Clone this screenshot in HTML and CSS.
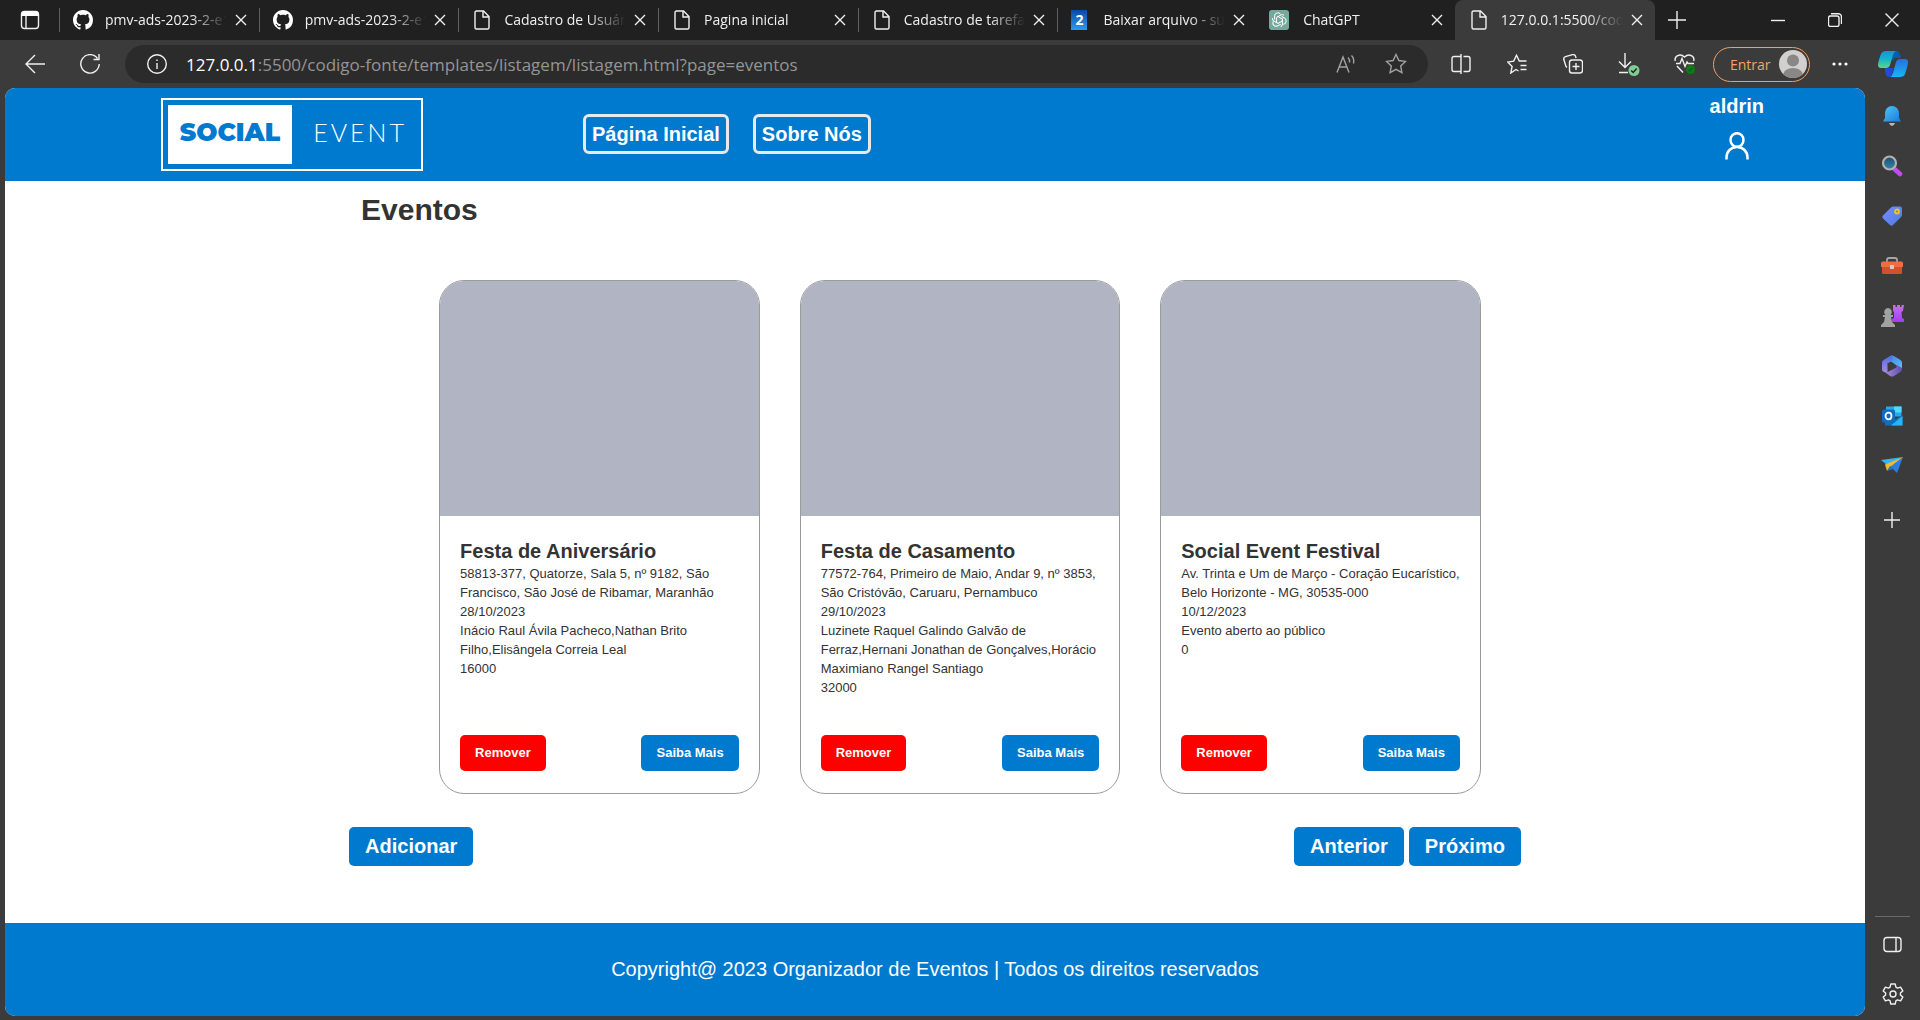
FILE: index.html
```html
<!DOCTYPE html>
<html lang="pt-BR">
<head>
<meta charset="utf-8">
<meta name="viewport" content="width=device-width, initial-scale=1">
<title>Eventos</title>
<link rel="stylesheet" href="styles.css">
</head>
<body>
<svg class="defs" aria-hidden="true">
  <symbol id="close" viewBox="0 0 12 12"><path d="M1 1l10 10M11 1L1 11"/></symbol>
  <symbol id="file" viewBox="0 0 20 20"><path d="M4.500 1h7L17 6.500V17.500a1.500 1.500 0 0 1-1.500 1.500h-11A1.500 1.500 0 0 1 3 17.500v-15A1.500 1.500 0 0 1 4.500 1zM11 1.500V7h5.500"/></symbol>
  <symbol id="github" viewBox="0 0 16 16"><path d="M8 0C3.580 0 0 3.580 0 8c0 3.540 2.290 6.530 5.470 7.590.4.070.55-.17.55-.38 0-.19-.01-.82-.01-1.490-2.010.37-2.530-.49-2.690-.94-.09-.23-.48-.94-.82-1.130-.28-.15-.68-.52-.01-.53.63-.01 1.080.58 1.230.82.72 1.210 1.870.87 2.330.66.070-.52.28-.87.51-1.070-1.780-.2-3.640-.89-3.640-3.950 0-.87.31-1.590.82-2.150-.08-.2-.36-1.020.08-2.120 0 0 .67-.21 2.200.82.64-.18 1.320-.27 2-.27s1.360.09 2 .27c1.530-1.040 2.200-.82 2.200-.82.44 1.100.16 1.920.08 2.120.51.56.82 1.270.82 2.150 0 3.070-1.870 3.750-3.650 3.950.29.25.54.73.54 1.480 0 1.070-.01 1.930-.01 2.200 0 .21.15.46.55.38A8.010 8.010 0 0 0 16 8c0-4.420-3.580-8-8-8z"/></symbol>
  <symbol id="star" viewBox="0 0 22 22"><path d="M11 1.500l2.900 6 6.600.9-4.800 4.600 1.200 6.600-5.900-3.200-5.900 3.200 1.200-6.600L1.500 8.400l6.600-.9z"/></symbol>
</svg>

<header class="browser-top">
  <div class="tab-strip">
    <button class="tab-actions" aria-label="Menu de guias"><svg width="20" height="20" viewBox="0 0 20 20"><rect class="line" x="1.500" y="1.500" width="17" height="17" rx="3"/><path class="solid" d="M1 5a4 4 0 0 1 4-4h10a4 4 0 0 1 4 4v1H1z"/><path class="line" d="M6 6v12"/></svg></button>
    <div class="tabs" role="tablist">
      <div class="tab" role="tab"><svg class="fav solid"><use href="#github"/></svg><span class="title">pmv-ads-2023-2-e1-proj</span><button aria-label="Fechar guia"><svg class="line x"><use href="#close"/></svg></button></div>
      <div class="tab" role="tab"><svg class="fav solid"><use href="#github"/></svg><span class="title">pmv-ads-2023-2-e1-proj</span><button aria-label="Fechar guia"><svg class="line x"><use href="#close"/></svg></button></div>
      <div class="tab" role="tab"><svg class="fav line"><use href="#file"/></svg><span class="title">Cadastro de Usuário</span><button aria-label="Fechar guia"><svg class="line x"><use href="#close"/></svg></button></div>
      <div class="tab" role="tab"><svg class="fav line"><use href="#file"/></svg><span class="title">Pagina inicial</span><button aria-label="Fechar guia"><svg class="line x"><use href="#close"/></svg></button></div>
      <div class="tab" role="tab"><svg class="fav line"><use href="#file"/></svg><span class="title">Cadastro de tarefas</span><button aria-label="Fechar guia"><svg class="line x"><use href="#close"/></svg></button></div>
      <div class="tab" role="tab"><span class="fav two">2</span><span class="title">Baixar arquivo - suporte</span><button aria-label="Fechar guia"><svg class="line x"><use href="#close"/></svg></button></div>
      <div class="tab plain" role="tab"><svg class="fav" viewBox="0 0 20 20"><rect width="20" height="20" rx="3" fill="#74aa9c"/><g fill="none" stroke="#fff"><path id="petal" d="M5.600 9.500V6a3.300 3.300 0 0 1 6-1.800M7.500 13V7.500l4.500-2.600a3.300 3.300 0 0 1 3 .3"/><use href="#petal" transform="rotate(120 10 10)"/><use href="#petal" transform="rotate(240 10 10)"/></g></svg><span class="title">ChatGPT</span><button aria-label="Fechar guia"><svg class="line x"><use href="#close"/></svg></button></div>
      <div class="tab active" role="tab" aria-selected="true"><svg class="fav line"><use href="#file"/></svg><span class="title">127.0.0.1:5500/codigo-fonte</span><button aria-label="Fechar guia"><svg class="line x"><use href="#close"/></svg></button></div>
    </div>
    <button class="new-tab" aria-label="Nova guia"><svg class="line" width="18" height="18"><path d="M9 0v18M0 9h18"/></svg></button>
    <div class="window-controls">
      <button aria-label="Minimizar"><svg class="line" width="14" height="14"><path d="M0 7.500h14"/></svg></button>
      <button aria-label="Restaurar"><svg class="line" width="14" height="14"><rect x=".5" y="3" width="10.500" height="10.500" rx="2"/><path d="M3 .8h7.500a3 3 0 0 1 3 3V11"/></svg></button>
      <button aria-label="Fechar"><svg class="line" width="14" height="14"><path d="M.5.5l13 13M13.500.5l-13 13"/></svg></button>
    </div>
  </div>

  <div class="toolbar">
    <button class="nav-btn" aria-label="Voltar"><svg class="line" width="20" height="20"><path d="M20 10H1M10 1L1 10l9 9"/></svg></button>
    <button class="nav-btn" aria-label="Atualizar"><svg class="line" width="20" height="20"><path d="M17.500 4.500A9.200 9.200 0 1 0 19.200 10M19 0v5.500h-5.500"/></svg></button>
    <div class="address">
      <svg class="line" width="20" height="20"><circle cx="10" cy="10" r="9.300"/><path d="M10 9v6M10 5.500v1.500"/></svg>
      <span class="host">127.0.0.1</span><input type="text" aria-label="Endereço" value=":5500/codigo-fonte/templates/listagem/listagem.html?page=eventos">
      <button class="dim" aria-label="Ler em voz alta"><svg class="line" width="20" height="20"><path d="M1 18.500L7 3l6 15.500M3 13h8M12 3.500q2 2 1.500 5M15.500 1.500q3 3 2 8"/></svg></button>
      <button class="dim" aria-label="Adicionar aos favoritos"><svg class="line" width="22" height="22"><use href="#star"/></svg></button>
    </div>
    <div class="tools">
      <button aria-label="Dividir tela"><svg class="line" width="20" height="20"><path d="M7.500 2.500H3a2 2 0 0 0-2 2v11a2 2 0 0 0 2 2h4.500M12.500 2.500H17a2 2 0 0 1 2 2v11a2 2 0 0 1-2 2h-4.500M10 0v20M7.500 2.500H10M7.500 17.500H10"/></svg></button>
      <button aria-label="Favoritos"><svg class="line" width="20" height="20"><path d="M11.500 17L9 15.500 3.800 19l1.300-6.500L.7 8l6-.9L9.500 1.300 12.300 7h7.200M13.500 11.500h6M13.500 15.500h6"/></svg></button>
      <button aria-label="Coleções"><svg class="line" width="20" height="20"><rect x="6.500" y="6" width="13" height="13" rx="2.500"/><path d="M13 9v7M9.500 12.500h7M4 13.500l-1-1L.8 5.500A2.500 2.500 0 0 1 2.500 2.700l7-2A2.500 2.500 0 0 1 12.600 2.500l.5 1.500"/></svg></button>
      <button aria-label="Downloads"><svg class="line" width="22" height="24"><path d="M7 1v14M1 9.500L7 15.500 13 9.500M1 20.500h9"/><circle cx="16" cy="18.500" r="5.500" fill="#7fce94" stroke="none"/><path d="M13.200 18.500l2 2 3.500-4" stroke="#222"/></svg></button>
      <button aria-label="Desempenho"><svg class="line" width="22" height="22"><path d="M2 10.500h4l2-5 3 8 2-4.500 1 1.500h6M1.300 8C0 3 6 0 10.500 4 15 0 21 3 19.700 8M3 13l6 6.500"/><circle cx="16.500" cy="16.500" r="4.500" fill="#107c10" stroke="none"/><path d="M14.500 16.500l1.500 1.500 2.500-3" stroke="#063"/></svg></button>
    </div>
    <button class="signin">Entrar<svg width="28" height="28" viewBox="0 0 28 28"><defs><clipPath id="round"><circle cx="14" cy="14" r="14"/></clipPath></defs><g clip-path="url(#round)"><rect width="28" height="28" fill="#d2d0ce"/><circle cx="14" cy="10.500" r="6" fill="#8a8886"/><ellipse cx="14" cy="25" rx="10" ry="7" fill="#8a8886"/></g></svg></button>
    <button class="more" aria-label="Mais"><svg width="16" height="4"><g fill="#fff"><circle cx="2" cy="2" r="1.600"/><circle cx="8" cy="2" r="1.600"/><circle cx="14" cy="2" r="1.600"/></g></svg></button>
    <button class="copilot" aria-label="Copilot"><svg width="30" height="28" viewBox="0 0 30 28"><defs><linearGradient id="cpa" x1="0" y1="0" x2="0" y2="1"><stop offset="0" stop-color="#1595d8"/><stop offset=".5" stop-color="#18b5c8"/><stop offset="1" stop-color="#5fd68a"/></linearGradient><linearGradient id="cpb" x1="0" y1="0" x2="0" y2="1"><stop offset="0" stop-color="#2a6fdc"/><stop offset="1" stop-color="#16b6f6"/></linearGradient></defs><path fill="#0c5ba8" d="M13 1h6q2 0 3 3l1 4h-6l-3 3z"/><path fill="#1f4bd8" d="M7 18h8l1-3-2 9q-1 3-3 3-3 0-4-5z"/><path fill="url(#cpa)" d="M8 1h10q-2 1-3 4l-3 10q-1 3-4 3H3q-3 0-3-3 0-3 3-11 1-3 5-3z"/><path fill="url(#cpb)" d="M22 27H12q2-1 3-4l3-11q1-3 4-3h5q3 0 3 3 0 3-3 12-1 3-5 3z"/></svg></button>
  </div>
</header>

<div class="browser-body">
  <div class="page">
    <header class="site-header">
      <a class="logo" href="#"><span class="logo-social">SOCIAL</span><span class="logo-event">EVENT</span></a>
      <nav class="site-nav">
        <a href="#">Página Inicial</a>
        <a href="#">Sobre Nós</a>
      </nav>
      <a class="user" href="#">aldrin<svg width="24" height="28" viewBox="0 0 24 28"><ellipse cx="12" cy="8" rx="6.500" ry="6.800"/><path d="M1.500 27.500v-2c0-6 4.500-10.500 10.500-10.500s10.500 4.500 10.500 10.500v2"/></svg></a>
    </header>

    <main class="content">
      <h1>Eventos</h1>
      <ul class="cards">
        <li class="card">
          <div class="card-image"></div>
          <div class="card-body">
            <h2>Festa de Aniversário</h2>
            <p>58813-377, Quatorze, Sala 5, nº 9182, São Francisco, São José de Ribamar, Maranhão</p>
            <p>28/10/2023</p>
            <p>Inácio Raul Ávila Pacheco,Nathan Brito Filho,Elisângela Correia Leal</p>
            <p>16000</p>
            <div class="card-actions"><button class="btn small danger">Remover</button><button class="btn small">Saiba Mais</button></div>
          </div>
        </li>
        <li class="card">
          <div class="card-image"></div>
          <div class="card-body">
            <h2>Festa de Casamento</h2>
            <p>77572-764, Primeiro de Maio, Andar 9, nº 3853, São Cristóvão, Caruaru, Pernambuco</p>
            <p>29/10/2023</p>
            <p>Luzinete Raquel Galindo Galvão de Ferraz,Hernani Jonathan de Gonçalves,Horácio Maximiano Rangel Santiago</p>
            <p>32000</p>
            <div class="card-actions"><button class="btn small danger">Remover</button><button class="btn small">Saiba Mais</button></div>
          </div>
        </li>
        <li class="card">
          <div class="card-image"></div>
          <div class="card-body">
            <h2>Social Event Festival</h2>
            <p>Av. Trinta e Um de Março - Coração Eucarístico, Belo Horizonte - MG, 30535-000</p>
            <p>10/12/2023</p>
            <p>Evento aberto ao público</p>
            <p>0</p>
            <div class="card-actions"><button class="btn small danger">Remover</button><button class="btn small">Saiba Mais</button></div>
          </div>
        </li>
      </ul>
      <div class="pager">
        <button class="btn">Adicionar</button>
        <div class="pager-nav"><button class="btn">Anterior</button><button class="btn">Próximo</button></div>
      </div>
    </main>

    <footer class="site-footer">Copyright@ 2023 Organizador de Eventos | Todos os direitos reservados</footer>
  </div>

  <aside class="sidebar">
    <svg class="defs" aria-hidden="true"><defs>
      <linearGradient id="bell" x1="0" y1="0" x2="1" y2="1"><stop offset="0" stop-color="#4cc9f5"/><stop offset="1" stop-color="#1b78dc"/></linearGradient>
      <linearGradient id="tag" x1="0" y1="0" x2="1" y2="1"><stop offset="0" stop-color="#7a8cff"/><stop offset="1" stop-color="#4a7de0"/></linearGradient>
      <linearGradient id="rook" x1="0" y1="0" x2="0" y2="1"><stop offset="0" stop-color="#c273e8"/><stop offset="1" stop-color="#a33cf5"/></linearGradient>
      <linearGradient id="lens" x1="0" y1="0" x2="0" y2="1"><stop offset="0" stop-color="#1d4f70"/><stop offset="1" stop-color="#2f86b0"/></linearGradient>
      <linearGradient id="hexa" x1="0" y1="0" x2="0" y2="1"><stop offset="0" stop-color="#4a6ee0"/><stop offset="1" stop-color="#a98be0"/></linearGradient>
      <linearGradient id="hexb" x1="0" y1="0" x2="1" y2="1"><stop offset="0" stop-color="#3f7fe0"/><stop offset="1" stop-color="#5fc4f5"/></linearGradient>
      <linearGradient id="hexc" x1="0" y1="0" x2="1" y2="0"><stop offset="0" stop-color="#b48be0"/><stop offset="1" stop-color="#5a4fae"/></linearGradient>
    </defs></svg>
    <button aria-label="Notificações"><svg width="22" height="22"><path fill="url(#bell)" d="M11 1a7 7 0 0 0-7 7v5l-2 3.500h18L18 13V8a7 7 0 0 0-7-7z"/><path fill="#b8b8b8" d="M8 18h6q-1 3-3 3t-3-3z"/></svg></button>
    <button aria-label="Pesquisar"><svg width="22" height="22"><path d="M13.500 14l5.500 5" stroke="#c04cf0" stroke-width="4.500" stroke-linecap="round"/><circle cx="8.500" cy="8" r="6.500" fill="url(#lens)" stroke="#b4b0ae" stroke-width="2.200"/></svg></button>
    <button aria-label="Compras"><svg width="22" height="22"><path fill="url(#tag)" d="M12 1.500h7q2 0 2 2V10q0 1-1 2l-8 8q-1.500 1.500-3 0l-7-6.500q-1.500-1.500 0-3L10 2.500q1-1 2-1z"/><circle cx="16" cy="6.500" r="2" fill="none" stroke="#f2c811" stroke-width="1.800"/></svg></button>
    <button aria-label="Ferramentas"><svg width="24" height="22"><path d="M7 8V5q0-2 2-2h6q2 0 2 2v3" fill="none" stroke="#a5a5a5" stroke-width="1.800"/><rect x="2" y="9" width="20" height="10" rx="1.500" fill="#d3502a"/><path fill="#ef6d42" d="M1 8q0-1.500 1.500-1.500h19Q23 6.500 23 8v4H1z"/><rect x="10" y="10" width="4" height="4" fill="#ccc"/></svg></button>
    <button aria-label="Jogos"><svg width="24" height="24"><path fill="url(#rook)" d="M13 1h2.500v2H17V1h3v2h1.500V1H24l-1 6-1.500 1 .5 6 2 1v3H12v-3l2-1V8l-1-1z"/><path fill="#a2a2a2" d="M8 4a4 4 0 0 1 2.500 7H13v2h-2l1 5 3 3v2H1v-2l3-3 1-5H3v-2h2.500A4 4 0 0 1 8 4z"/></svg></button>
    <button aria-label="Microsoft 365"><svg width="22" height="22"><path fill="url(#hexb)" d="M9 1q2-1 4 0l6.500 4Q21 6 21 8v6l-6-4-5-3.500L7 8V3z"/><path fill="url(#hexa)" d="M11 0v5L6.500 8v9q-1.500 1-3 0L2 16.500Q1 16 1 14V8q0-2 1.500-3z"/><path fill="url(#hexc)" d="M3 16.500q2 1.500 3.500.5l9-4.500V9.800L21 13v1q0 2-1.500 3L13 21q-2 1-4 0z"/></svg></button>
    <button aria-label="Outlook"><svg width="22" height="22"><path fill="#28a8ea" d="M5 1.500h15.500v10H5z"/><path fill="#50d9ff" d="M13 1.500h7.500v6H13z"/><path fill="#1070c0" d="M4 11l9 4 8.500-5v10.500H4z"/><path fill="#28b4f0" d="M21.500 11v9.500H10z"/><rect x="1" y="4.500" width="13" height="13" rx="1.500" fill="#0f6cbd"/><ellipse cx="7.500" cy="11" rx="3" ry="3.300" fill="none" stroke="#fff" stroke-width="1.800"/></svg></button>
    <button aria-label="Drop"><svg width="22" height="20"><path fill="#35b4ef" d="M0 4l22-3L6 9z"/><path fill="#2b7fe0" d="M22 1L16 17l-7-7z"/><path fill="#f5b829" d="M22 1L4 8.500 6 15l3-4z"/><path fill="#2672c8" d="M6 15l3-5 3 3z"/></svg></button>
    <button class="add" aria-label="Personalizar"><svg class="line" width="16" height="16"><path d="M8 0v16M0 8h16"/></svg></button>
    <div class="sidebar-end">
      <button aria-label="Ocultar barra lateral"><svg class="line" width="20" height="18"><rect x="1" y="1.500" width="17" height="14" rx="3"/><path d="M13 1.500v14"/></svg></button>
      <button aria-label="Configurações"><svg class="line" width="22" height="22" viewBox="0 0 22 22"><path d="M8.800 1h4.400l.7 3.200 1.600.9 3.100-1 2.200 3.800-2.400 2.200v1.800l2.400 2.200-2.200 3.800-3.100-1-1.600.9-.7 3.200H8.800l-.7-3.200-1.600-.9-3.100 1-2.200-3.800 2.400-2.200v-1.800L1.200 7.900l2.200-3.800 3.100 1 1.600-.9z" stroke-linejoin="round"/><circle cx="11" cy="11" r="3"/></svg></button>
    </div>
  </aside>
</div>
</body>
</html>
```
FILE: styles.css
```css
* { box-sizing: border-box; }

body {
  margin: 0;
  min-height: 100vh;
  display: flex;
  flex-direction: column;
  background: #3b3b3b;
  color: #fff;
  font-family: "Segoe UI", "Open Sans", sans-serif;
  font-size: 14px;
}

button {
  margin: 0;
  padding: 0;
  border: 0;
  background: none;
  color: inherit;
  font: inherit;
  cursor: pointer;
}

svg { display: block; flex: none; }
.defs { position: absolute; width: 0; height: 0; }
.line { fill: none; stroke: #f0f0f0; stroke-width: 1.4; }
.solid { fill: #fff; stroke: none; }

/* Tab strip */
.tab-strip {
  display: flex;
  height: 40px;
  background: #202020;
}
.tab-actions { width: 59px; padding-left: 20px; }
.tabs { display: flex; flex: 0 1 83.1%; min-width: 0; }
.tab {
  flex: 1 1 0;
  min-width: 0;
  display: flex;
  align-items: center;
  padding: 0 12px 0 14px;
  color: #f0f0f0;
  background: linear-gradient(#606060, #606060) 0 8px / 1px 24px no-repeat;
}
.tab.plain { background: none; padding-left: 12px; }
.tab.plain .title { margin-left: 14px; }
.tab.active { background: #3b3b3b; border-radius: 8px 8px 0 0; }
.fav { width: 20px; height: 20px; flex: none; }
.two {
  width: 16px;
  margin-right: 4px;
  background: linear-gradient(#0d47a8, #2c9cf0);
  color: #fff;
  font-weight: 700;
  line-height: 20px;
  text-align: center;
}
.title {
  flex: 1;
  min-width: 0;
  margin: 0 8px 0 12px;
  overflow: hidden;
  white-space: nowrap;
  line-height: 20px;
  padding-bottom: 1px;
  -webkit-mask-image: linear-gradient(90deg, #000 70%, transparent);
  mask-image: linear-gradient(90deg, #000 70%, transparent);
}
.x { width: 12px; height: 12px; }
.new-tab { padding: 0 13px; }
.window-controls { display: flex; margin-left: auto; }
.window-controls button {
  width: 57px;
  display: flex;
  align-items: center;
  justify-content: center;
}

/* Toolbar */
.toolbar {
  display: flex;
  align-items: center;
  height: 48px;
  padding-left: 7px;
}
.nav-btn { width: 55px; display: flex; justify-content: center; }
.address {
  flex: 1;
  display: flex;
  align-items: center;
  height: 38px;
  margin-left: 8px;
  padding: 0 21px 0 22px;
  border-radius: 19px;
  background: #2b2b2b;
  font-size: 17px;
}
.host { margin-left: 19px; }
.address input {
  flex: 1;
  min-width: 0;
  padding: 0;
  border: 0;
  outline: 0;
  background: none;
  color: #959595;
  font: inherit;
}
.dim { margin-left: 29px; opacity: .6; }
.tools { display: flex; padding-left: 5px; }
.tools button {
  width: 56px;
  height: 24px;
  display: flex;
  align-items: center;
  justify-content: center;
}
.signin {
  display: flex;
  align-items: center;
  justify-content: space-between;
  width: 97px;
  height: 35px;
  padding: 0 2px 0 16px;
  border: 1px solid #eba069;
  border-radius: 18px;
  color: #f0a46c;
}
.more { width: 60px; display: flex; justify-content: center; }
.copilot { width: 50px; padding-left: 8px; }

/* Page frame and sidebar */
.browser-body { flex: 1; display: flex; }
.page {
  flex: 1;
  min-width: 0;
  display: flex;
  flex-direction: column;
  margin: 0 0 4px 5px;
  border-radius: 10px;
  overflow: hidden;
  background: #fff;
  color: #333;
  font-family: Arial, "Liberation Sans", sans-serif;
}
.sidebar {
  width: 55px;
  display: flex;
  flex-direction: column;
  padding: 3px 1px 2px 0;
}
.sidebar button {
  height: 50px;
  width: 100%;
  display: flex;
  align-items: center;
  justify-content: center;
}
.sidebar .add { margin-top: 4px; }
.sidebar-end {
  margin: auto 9px 0 10px;
  padding-top: 3px;
  border-top: 1px solid #6a6a6a;
}
.sidebar-end button { height: 49px; }

/* Site header */
.site-header {
  display: flex;
  align-items: center;
  height: 93px;
  padding: 0 101px 0 156px;
  background: #007acf;
  color: #fff;
}
.logo {
  display: flex;
  width: 262px;
  height: 73px;
  padding: 5px;
  border: 2px solid #fff;
  color: #fff;
  font-family: Montserrat, Lato, sans-serif;
  font-size: 25px;
  line-height: 55px;
  text-decoration: none;
}
.logo-social {
  width: 124px;
  background: #fff;
  color: #007acf;
  font-weight: 900;
  text-align: center;
}
.logo-event {
  flex: 1;
  padding-left: 12px;
  font-family: Lato, sans-serif;
  font-weight: 300;
  letter-spacing: 3px;
  text-align: center;
}
.site-nav { display: flex; gap: 24px; margin: 0 0 2px 160px; }
.site-nav a {
  padding: 5px 6px;
  border: 3px solid #e9e9e9;
  border-radius: 6px;
  color: #fff;
  font-size: 20px;
  font-weight: 700;
  line-height: 24px;
  text-decoration: none;
}
.user {
  display: flex;
  flex-direction: column;
  align-items: center;
  gap: 16px;
  margin-left: auto;
  padding-bottom: 14px;
  color: #fff;
  font-size: 20px;
  font-weight: 700;
  line-height: 20px;
  text-decoration: none;
}
.user svg { fill: none; stroke: #fff; stroke-width: 2.5; }

/* Event listing */
.content { flex: 1; width: 63%; margin: 0 auto; }
h1 {
  margin: 11px 0 53px;
  padding-left: 12px;
  font-size: 30px;
  line-height: 35px;
}
.cards {
  display: grid;
  grid-template-columns: repeat(3, 1fr);
  gap: 40px;
  margin: 0;
  padding: 0 40px 0 90px;
  list-style: none;
}
.card {
  display: flex;
  flex-direction: column;
  min-height: 514px;
  border: 1px solid #9b9b9b;
  border-radius: 25px;
  overflow: hidden;
}
.card-image { height: 235px; background: #b1b4c3; }
.card-body {
  flex: 1;
  display: flex;
  flex-direction: column;
  padding: 23px 20px 22px;
}
h2 { margin: 0; font-size: 20px; line-height: 25px; }
.card-body p { margin: 0; font-size: 13px; line-height: 19px; }
.card-actions {
  display: flex;
  justify-content: space-between;
  margin-top: auto;
}
.btn {
  padding: 0 16px;
  border-radius: 5px;
  background: #007acf;
  color: #fff;
  font-size: 20px;
  font-weight: 700;
  line-height: 39px;
}
.btn.small { padding: 0 15px; font-size: 13px; line-height: 36px; }
.btn.danger { background: #f00; }
.pager { display: flex; justify-content: space-between; margin: 33px 0 40px; }
.pager-nav { display: flex; gap: 5px; }

.site-footer {
  padding: 35px 16px;
  background: #007acf;
  color: #fff;
  font-size: 20px;
  line-height: 23px;
  text-align: center;
}
```
